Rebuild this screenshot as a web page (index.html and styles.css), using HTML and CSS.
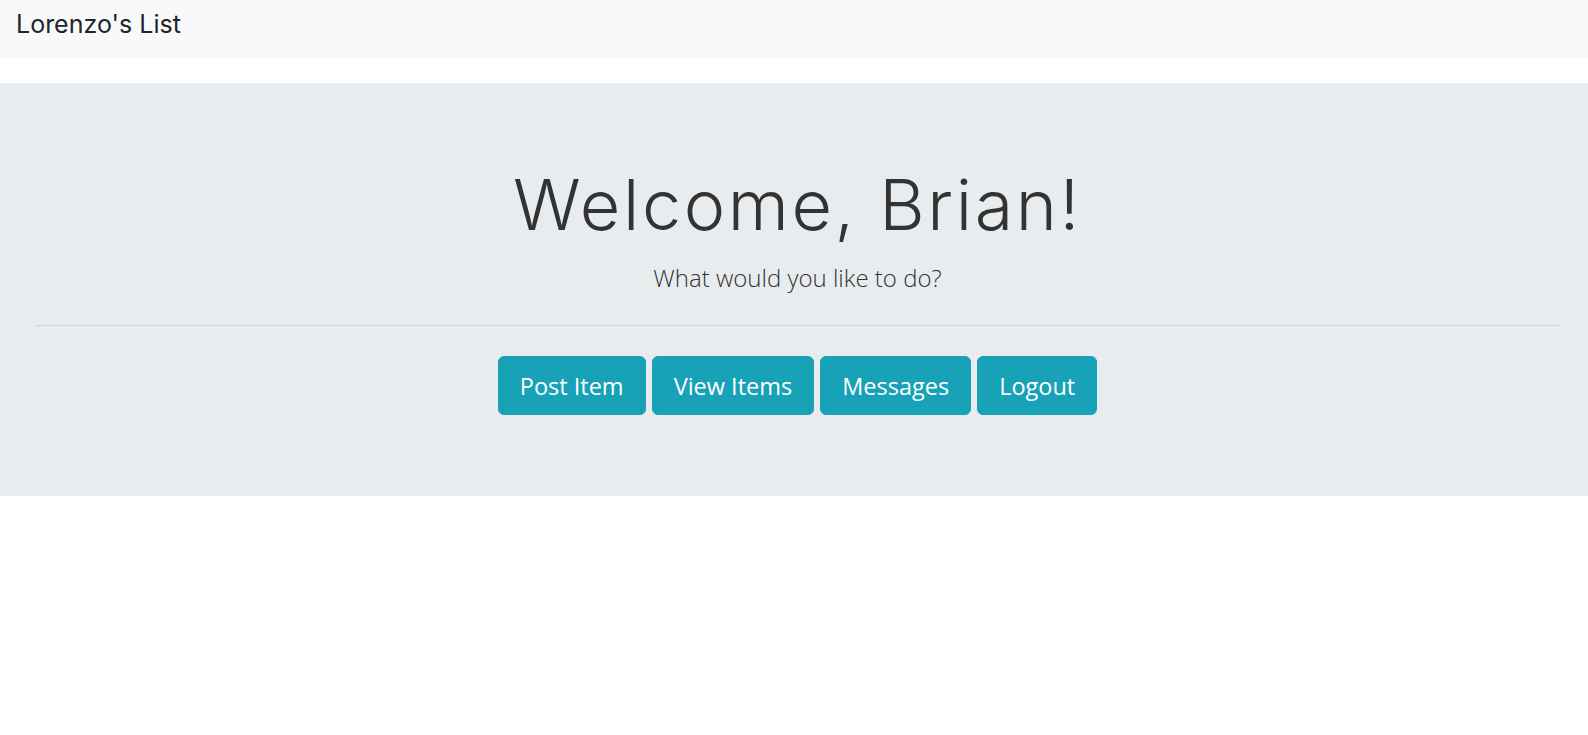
FILE: index.html
```html
<!DOCTYPE html>
<html lang="en">
<head>
<meta charset="utf-8">
<title>Lorenzo's List</title>
<link rel="stylesheet" href="styles.css">
</head>
<body>
<nav class="navbar">
  <a class="brand" href="#">Lorenzo's List</a>
</nav>
<main class="jumbotron">
  <h1 class="display">Welcome, Brian!</h1>
  <p class="lead">What would you like to do?</p>
  <hr class="divider">
  <div class="actions">
    <a class="btn" href="#">Post Item</a>
    <a class="btn" href="#">View Items</a>
    <a class="btn" href="#">Messages</a>
    <a class="btn" href="#">Logout</a>
  </div>
</main>
</body>
</html>
```

FILE: styles.css
```css
html, body {
  margin: 0;
  padding: 0;
  background: #ffffff;
}

body {
  font-family: "Open Sans", "Liberation Sans", sans-serif;
  color: #333333;
}

.navbar {
  height: 58px;
  background: #f8f9fa;
  display: flex;
  align-items: center;
  padding: 0 16px;
  box-sizing: border-box;
}

.brand {
  font-family: "Inter", "Liberation Sans", sans-serif;
  font-weight: 400;
  font-size: 25px;
  color: #212529;
  text-decoration: none;
  margin-top: -10px;
}

.jumbotron {
  margin-top: 25px;
  background: #e9ecef;
  padding: 80px 28px 81px 35px;
  text-align: center;
}

.display {
  margin: 0;
  font-family: "Inter", "Liberation Sans", sans-serif;
  font-weight: 300;
  font-size: 70px;
  line-height: 84px;
  letter-spacing: 2.6px;
  color: #333333;
}

.lead {
  margin: 13px 0 0;
  font-family: "Open Sans", "Liberation Sans", sans-serif;
  font-weight: 300;
  font-size: 24px;
  line-height: 36px;
  color: #333333;
}

.divider {
  margin: 29px 0 0;
  border: 0;
  border-top: 1px solid #d2d4d7;
  height: 0;
}

.actions {
  margin-top: 30px;
  display: flex;
  justify-content: center;
  gap: 6px;
}

.btn {
  display: inline-flex;
  align-items: center;
  justify-content: center;
  height: 59px;
  padding: 0 21px;
  box-sizing: border-box;
  background: #17a2b8;
  border: 1px solid #17a2b8;
  border-radius: 6px;
  color: #ffffff;
  text-decoration: none;
  font-size: 23.5px;
  font-family: "Open Sans", "Liberation Sans", sans-serif;
}
```
